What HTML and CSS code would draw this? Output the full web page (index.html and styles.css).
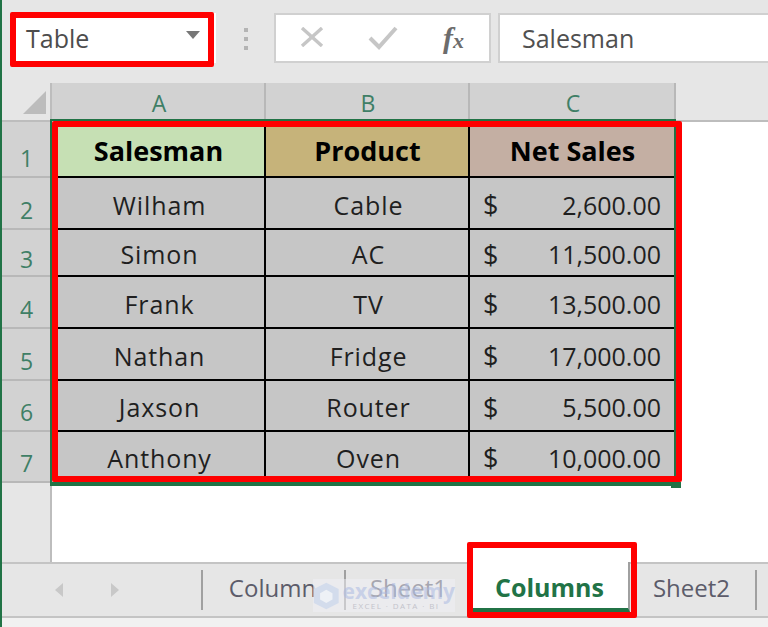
FILE: index.html
```html
<!DOCTYPE html>
<html lang="en">
<head>
<meta charset="utf-8">
<title>Table</title>
<link rel="stylesheet" href="styles.css">
</head>
<body>
<div class="app">
  <div class="formula-bar">
    <div class="name-box"><span>Table</span><i class="caret"></i></div>
    <div class="grip"><i></i><i></i><i></i></div>
    <div class="fx-buttons">
      <svg class="fx-x" width="24" height="20" viewBox="0 0 24 20"><path d="M2 1 L22 19 M22 1 L2 19" stroke="#c6c6c6" stroke-width="3.4" fill="none"/></svg>
      <svg class="fx-check" width="30" height="24" viewBox="0 0 30 24"><path d="M2 12 L11 21 L28 2" stroke="#c6c6c6" stroke-width="4" fill="none"/></svg>
      <span class="fx">f<small>x</small></span>
    </div>
    <div class="formula-input">Salesman</div>
  </div>
  <div class="sheet">
    <div class="corner"><i></i></div>
    <div class="col-head">A</div><div class="col-head">B</div><div class="col-head">C</div>
    <div class="col-rest"></div>

    <div class="row-head row-first">1</div>
    <div class="cell head green">Salesman</div><div class="cell head tan">Product</div><div class="cell head rose">Net Sales</div>
    <div class="rest"></div>

    <div class="row-head">2</div>
    <div class="cell">Wilham</div><div class="cell">Cable</div><div class="cell money"><span class="cur">$</span><span>2,600.00</span></div>
    <div class="rest"></div>

    <div class="row-head">3</div>
    <div class="cell">Simon</div><div class="cell">AC</div><div class="cell money"><span class="cur">$</span><span>11,500.00</span></div>
    <div class="rest"></div>

    <div class="row-head">4</div>
    <div class="cell">Frank</div><div class="cell">TV</div><div class="cell money"><span class="cur">$</span><span>13,500.00</span></div>
    <div class="rest"></div>

    <div class="row-head">5</div>
    <div class="cell">Nathan</div><div class="cell">Fridge</div><div class="cell money"><span class="cur">$</span><span>17,000.00</span></div>
    <div class="rest"></div>

    <div class="row-head">6</div>
    <div class="cell">Jaxson</div><div class="cell">Router</div><div class="cell money"><span class="cur">$</span><span>5,500.00</span></div>
    <div class="rest"></div>

    <div class="row-head">7</div>
    <div class="cell last">Anthony</div><div class="cell last">Oven</div><div class="cell money last"><span class="cur">$</span><span>10,000.00</span></div>
    <div class="rest"></div>

    <div class="row-blank"></div>
    <div class="blank"></div>
  </div>
  <div class="tabs">
    <div class="tab-nav">
      <svg width="10" height="14" viewBox="0 0 10 14"><path d="M9 0 V14 L1 7 Z" fill="#c8c8c8"/></svg>
      <svg width="10" height="14" viewBox="0 0 10 14"><path d="M1 0 V14 L9 7 Z" fill="#c8c8c8"/></svg>
    </div>
    <div class="tab first">Column</div>
    <div class="tab second">Sheet1</div>
    <div class="tab active">Columns</div>
    <div class="tab last-tab">Sheet2</div>
  </div>
  <div class="status"></div>

  <div class="selection"></div>
  <div class="handle"></div>
  <div class="red red-name"></div>
  <div class="red red-table"></div>
  <div class="red red-tab"></div>
  <div class="watermark">
    <svg width="30" height="32" viewBox="0 0 30 32"><path d="M15 1 L29 8 V24 L15 31 L1 24 V8 Z" fill="#d3dcec"/><path d="M15 9 L22 13 V20 L15 24 L8 20 V13 Z" fill="#eef1f6"/></svg>
    <div class="wm-text"><b>exceldemy</b><small>EXCEL · DATA · BI</small></div>
  </div>
</div>
</body>
</html>
```
FILE: styles.css
```css
* { box-sizing: border-box; }
html, body { margin: 0; padding: 0; }
body { width: 768px; height: 627px; overflow: hidden; background: #fff; font-family: "Open Sans", "Liberation Sans", sans-serif; }
.app { position: relative; width: 768px; height: 627px; display: flex; flex-direction: column; border-left: 2px solid #217346; background: #e6e6e6; overflow: hidden; }

.formula-bar { height: 83px; display: flex; align-items: flex-start; padding-top: 13px; flex: none; }
.name-box { width: 202px; height: 50px; margin-left: 12px; background: #fff; display: flex; align-items: center; justify-content: space-between; padding: 0 16px 0 12px; font: 25px "Open Sans", sans-serif; color: #4d4d4d; }
.caret { width: 0; height: 0; border-left: 7px solid transparent; border-right: 7px solid transparent; border-top: 8px solid #777; margin-bottom: 6px; }
.grip { width: 60px; display: flex; flex-direction: column; align-items: center; gap: 5px; padding-top: 15px; }
.grip i { width: 4px; height: 4px; background: #b4b4b4; }
.fx-buttons { width: 217px; height: 50px; background: #fff; border: 2px solid #d0d0d0; display: flex; align-items: center; padding-left: 24px; margin-right: 7px; margin-left: -2px; }
.fx-x { margin-bottom: 2px; }
.fx-check { margin-left: 44px; }
.fx { margin-left: 45px; font: italic bold 30px "Liberation Serif", serif; color: #6c6c6c; }
.fx small { font-size: 22px; }
.formula-input { flex: 1; height: 50px; background: #fff; border: 2px solid #d0d0d0; border-right: 0; padding-left: 22px; font: 25px/46px "Open Sans", sans-serif; color: #505050; }

.sheet { flex: none; height: 479px; display: grid; grid-template-columns: 50px 214px 204px 206px 1fr; grid-template-rows: 39px 56px 52px 47px 52px 52px 51px 51px 1fr; background: #fff; }
.corner { background: #e6e6e6; border-right: 2px solid #bdbdbd; border-bottom: 2px solid #bdbdbd; position: relative; }
.corner i { position: absolute; right: 4px; bottom: 6px; width: 0; height: 0; border-left: 23px solid transparent; border-bottom: 23px solid #bcbcbc; }
.col-head { background: #d2d2d2; border-right: 2px solid #b8b8b8; display: flex; align-items: center; justify-content: center; font-size: 23px; color: #3f7f66; padding-top: 1px; padding-left: 2px; }
.col-rest { background: #e6e6e6; border-bottom: 2px solid #bdbdbd; }
.row-head { background: #d2d2d2; border-bottom: 2px solid #b8b8b8; display: flex; align-items: center; justify-content: center; font-size: 23px; color: #3f7f66; padding-top: 13px; padding-right: 1px; }
.row-first { padding-top: 18px; }
.cell { background: #c6c6c6; border-right: 2px solid #000; border-bottom: 2px solid #000; display: flex; align-items: center; justify-content: center; font: 25px "Open Sans", sans-serif; letter-spacing: .9px; color: #1f1f1f; padding-top: 3px; padding-left: 3px; }
.cell.last { border-bottom: 0; padding-top: 0; }
.head { font: bold 27px "Open Sans", sans-serif; letter-spacing: 0; color: #000; padding-top: 2px; padding-left: 1px; }
.green { background: #c6e0b4; }
.tan { background: #c6b37a; }
.rose { background: #c4afa3; }
.money { justify-content: space-between; padding-left: 13px; padding-right: 15px; border-right: 0; letter-spacing: 0; }
.cur { font-size: 27px; line-height: 1; }
.rest { background: #fff; }
.row-blank { background: #e6e6e6; border-right: 2px solid #bdbdbd; }
.blank { grid-column: 2 / -1; background: #fff; }

.tabs { height: 56px; flex: none; display: flex; align-items: stretch; background: #e6e6e6; border-top: 2px solid #c4c4c4; border-bottom: 2px solid #c4c4c4; font: 24px "Open Sans", sans-serif; color: #5c5c6a; }
.tab-nav { width: 199px; display: flex; align-items: center; gap: 46px; padding-left: 52px; }
.tab { position: relative; display: flex; align-items: center; justify-content: center; padding-bottom: 5px; }
.first { width: 143px; }
.second { width: 124px; padding-left: 5px; }
.tab.first::before, .tab.second::before, .tab.last-tab::after { content: ""; position: absolute; top: 6px; bottom: 6px; width: 2px; background: #a0a0a0; }
.tab.first::before, .tab.second::before { left: 0; }
.tab.last-tab::after { right: 0; }
.active { width: 162px; background: #fff; color: #217346; font-weight: 700; font-size: 25px; border-bottom: 4px solid #217346; border-right: 2px solid #a0a0a0; margin-top: -2px; margin-bottom: 4px; padding-bottom: 0; padding-top: 3px; padding-left: 3px; }
.last-tab { width: 127px; padding-right: 4px; }
.status { flex: 1; background: #f1f1f1; }

.selection { position: absolute; left: 48px; top: 119px; width: 626px; height: 367px; border: 2px solid #217346; border-bottom-width: 4px; }
.handle { position: absolute; left: 669px; top: 482px; width: 10px; height: 6px; background: #217346; }
.red { position: absolute; border: 6px solid #f00; border-radius: 2px; pointer-events: none; }
.red-name { left: 8px; top: 12px; width: 204px; height: 55px; }
.red-table { left: 50px; top: 121px; width: 630px; height: 361px; }
.red-tab { left: 465px; top: 542px; width: 170px; height: 76px; }

.watermark { position: absolute; left: 311px; top: 579px; width: 142px; height: 33px; display: flex; align-items: center; gap: 3px; background: rgba(240, 240, 245, .5); }
.wm-text { display: flex; flex-direction: column; font-size: 9px; line-height: 10px; color: #c3c3cb; letter-spacing: 1.4px; }
.wm-text b { font-size: 21px; line-height: 20px; color: rgba(170, 185, 225, .55); letter-spacing: 0; }
.wm-text small { font-size: 8px; padding-left: 10px; }
```
